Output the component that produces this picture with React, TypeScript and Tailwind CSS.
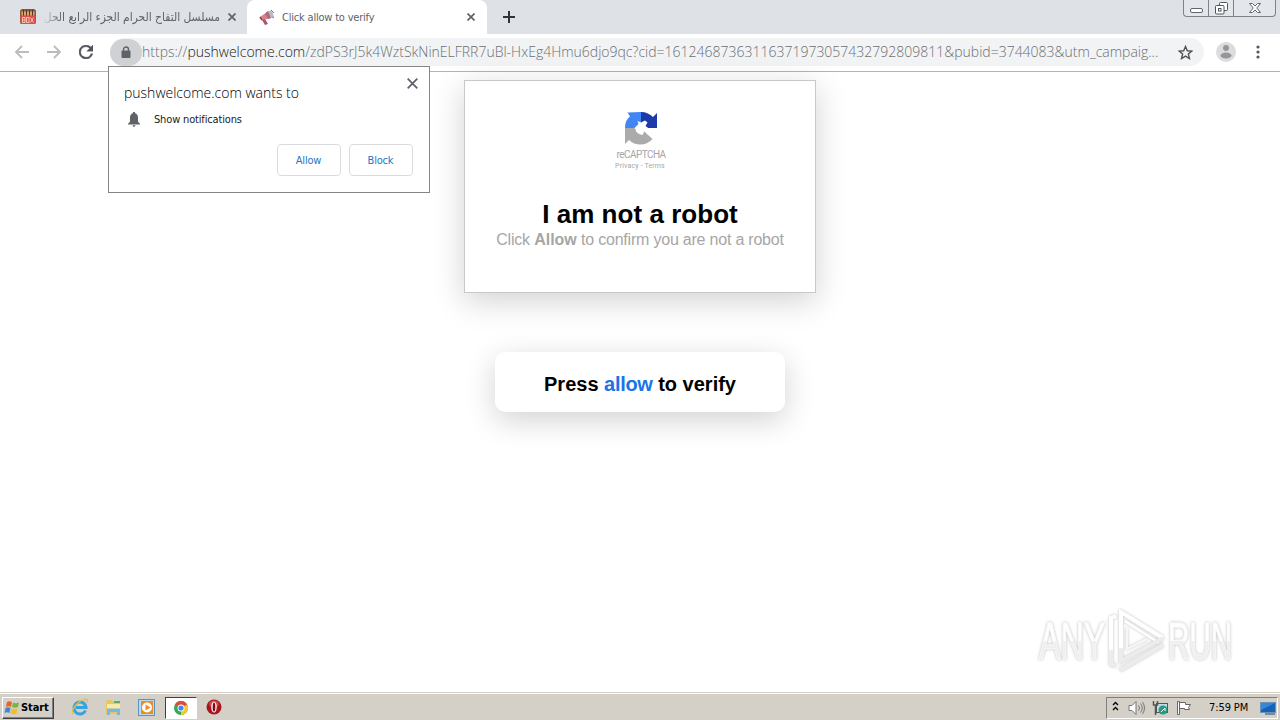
import type { ReactNode } from 'react';

const UI_FONT = "font-['DejaVu_Sans_Condensed','DejaVu_Sans',sans-serif] [font-stretch:condensed]";

function CloseIcon({ size = 8, color = '#5f6368' }: { size?: number; color?: string }) {
  return (
    <svg width={size} height={size} viewBox="0 0 8 8" className="block shrink-0">
      <path d="M.5.5l7 7M7.5.5l-7 7" stroke={color} strokeWidth={size > 8 ? 1.3 : 1.7} />
    </svg>
  );
}

function TabStrip() {
  return (
    <div className="flex h-[34px] bg-[#dee1e6]">
      {/* background tab */}
      <div className="flex h-[34px] w-[247px] items-center pl-[19px] pr-[11px]">
        <svg width="18" height="18" viewBox="0 0 17 18" className="shrink-0">
          <rect x=".5" y="1" width="16" height="15" rx="2.5" fill="#8a5a42" />
          <path d="M2 3.5h13v4H2z" fill="#d9a66b" />
          <path d="M4 1.5v6M7 1.5v6M10 1.5v6M13 1.5v6" stroke="#5a3426" strokeWidth="1" />
          <path d="M1 8h15v8H1z" fill="#d8514a" />
          <path d="M3 9.5h2.5v5H3zM7 9.5h2.5v5H7zM11 9.5l3 5M14 9.5l-3 5M3 12h2.5" fill="none" stroke="#f5c4b0" strokeWidth="1" />
        </svg>
        <div className="ml-[5px] h-5 w-[178px] [mask-image:linear-gradient(to_right,transparent,black_20px)]" dir="rtl">
          <span className={`${UI_FONT} block whitespace-nowrap text-[11.9px] leading-5 text-[#5f6368]`}>
            مسلسل التفاح الحرام الجزء الرابع الحل
          </span>
        </div>
        <div className="ml-auto"><CloseIcon /></div>
      </div>
      {/* active tab */}
      <div className="flex h-[34px] w-[240px] items-center rounded-t-lg bg-white pl-3 pr-3">
        <svg width="16" height="17" viewBox="0 0 16 17" className="shrink-0">
          <path d="M7 3l6-2 2 7-6 2z" fill="#b9bec6" />
          <path d="M1 8l7-5 3 6-8 2.5z" fill="#d9828c" />
          <path d="M6 5l3-3 3 7-3 1z" fill="#b36a78" />
          <path d="M3 11l3-1 3 5-3 1z" fill="#a4596b" />
          <path d="M12 1l3 3M13 8l2 1" stroke="#7e8792" />
          <path d="M1 8l2 3" stroke="#8a4456" strokeWidth="1.5" />
        </svg>
        <span className={`${UI_FONT} ml-[7px] mt-0.5 whitespace-nowrap text-[11px] tracking-[-0.2px] text-[#5f6368]`}>
          Click allow to verify
        </span>
        <div className="ml-auto"><CloseIcon /></div>
      </div>
      <svg width="12" height="12" viewBox="0 0 12 12" className="ml-4 mt-[11px]">
        <path d="M6 0v12M0 6h12" stroke="#303338" strokeWidth="2" />
      </svg>
      {/* window controls */}
      <div className="ml-auto mr-1 flex h-[17px] w-[93px] rounded-b border border-t-0 border-[#7e828b] bg-[#e3e6eb]">
        <div className="flex w-[25px] justify-center border-r border-[#7e828b] pt-2">
          <svg width="13" height="6"><rect x=".5" y=".5" width="12" height="4" rx="1.5" fill="white" stroke="#61656d" /></svg>
        </div>
        <div className="flex w-[25px] justify-center border-r border-[#7e828b] pt-0.5">
          <svg width="13" height="13" fill="white" stroke="#50545c">
            <rect x="4.5" y=".5" width="8" height="8" rx="1" />
            <rect x=".5" y="3.5" width="8.5" height="8.5" rx="1" />
            <rect x="3.5" y="6.5" width="2.5" height="2.5" />
          </svg>
        </div>
        <div className="flex flex-1 justify-center pt-[3px]">
          <svg width="12" height="10" viewBox="0 0 12 10">
            <path d="M.5.5h3L6 3 8.500.5h3L7.8 5l3.7 4.5h-3L6 7 3.500 9.500h-3L4.200 5z" fill="white" stroke="#61656d" />
          </svg>
        </div>
      </div>
    </div>
  );
}

function Toolbar() {
  return (
    <div className="flex h-[38px] items-center border-b border-[#b1b3b5] bg-white pl-[14px]">
      <svg width="16" height="14" viewBox="0 0 16 14" fill="none" stroke="#babcbe" strokeWidth="1.8" className="-mt-0.5">
        <path d="M15 7H2M8 1L2 7l6 6" />
      </svg>
      <svg width="16" height="14" viewBox="0 0 16 14" fill="none" stroke="#babcbe" strokeWidth="1.8" className="-mt-0.5 ml-4">
        <path d="M1 7h13M8 1l6 6-6 6" />
      </svg>
      <svg width="14" height="14" viewBox="4 4 16 16" className="-mt-0.5 ml-[17px]">
        <path fill="#505357" stroke="#505357" strokeWidth=".5" d="M17.65 6.35A7.958 7.958 0 0 0 12 4a8 8 0 1 0 7.73 10h-2.08A6 6 0 1 1 12 6c1.66 0 3.14.69 4.22 1.78L13 11h7V4z" />
      </svg>
      <div className="-mt-px ml-[17px] flex h-7 w-[1094px] items-center rounded-full bg-[#f1f3f4]">
        <div className="flex h-[27px] w-8 shrink-0 items-center justify-center rounded-full bg-[#cfd1d4]">
          <svg width="10" height="13" viewBox="0 0 10 13">
            <path d="M2.5 5V3.500a2.500 2.500 0 0 1 5 0V5" fill="none" stroke="#5f6368" strokeWidth="1.4" />
            <rect x=".5" y="4.5" width="9" height="7.5" rx="1" fill="#5f6368" />
          </svg>
        </div>
        <span className="-mt-0.5 w-[1034px] whitespace-nowrap font-['Open_Sans',sans-serif] text-[14px] font-light text-[#6b6f74]">
          https://<span className="text-[#202124]">pushwelcome.com</span>/zdPS3rJ5k4WztSkNinELFRR7uBl-HxEg4Hmu6djo9qc?cid=16124687363116371973057432792809811&amp;pubid=3744083&amp;utm_campaig...
        </span>
        <svg width="15" height="15" viewBox="0 0 24 24" className="ml-0.5 shrink-0">
          <path d="M12 2.5l2.9 6.7 7.2.6-5.5 4.7 1.7 7.1-6.3-3.800-6.300 3.800 1.700-7.100-5.500-4.700 7.200-.6z" fill="none" stroke="#505357" strokeWidth="2.3" />
        </svg>
      </div>
      <svg width="20" height="20" viewBox="0 0 20 20" className="-mt-0.5 ml-3">
        <circle cx="10" cy="10" r="10" fill="#dcdcdc" />
        <circle cx="10" cy="6" r="3" fill="#949699" />
        <ellipse cx="10" cy="13.5" rx="5.5" ry="3" fill="#949699" />
      </svg>
      <svg width="4" height="14" className="-mt-0.5 ml-5" fill="#55585c">
        <circle cx="2" cy="2" r="1.6" />
        <circle cx="2" cy="7" r="1.6" />
        <circle cx="2" cy="12" r="1.6" />
      </svg>
    </div>
  );
}

function PermissionButton({ children }: { children: ReactNode }) {
  return (
    <button className="h-8 w-16 rounded border border-[#d9dbde] bg-white pr-px pt-0.5 text-[11px] tracking-[-0.2px] text-[#1b77c5]">
      {children}
    </button>
  );
}

function PermissionPopup() {
  return (
    <div className="absolute left-[108px] top-[66px] h-[127px] w-[322px] border border-[#858585] bg-white pl-[15px] pr-4 text-[#202124]">
      <div className="absolute right-[11px] top-[11px]"><CloseIcon size={11} /></div>
      <div className="whitespace-nowrap pt-[15px] font-['Open_Sans',sans-serif] text-[14px] font-light leading-[22px] text-black">
        pushwelcome.com wants to
      </div>
      <div className={UI_FONT}>
        <div className="mt-[5px] flex h-5 items-center">
          <svg width="12" height="15" viewBox="0 0 12 15" className="ml-1" fill="#5f6368">
            <path d="M6 0c.8 0 1.2.5 1.2 1.3C9.300 1.900 10 3.800 10 6v3.700l2 2V12.500H0v-.8l2-2V6c0-2.200.7-4.100 2.800-4.700C4.800.5 5.200 0 6 0zM4.500 13.300h3c0 .9-.6 1.500-1.500 1.500s-1.500-.6-1.500-1.500z" />
          </svg>
          <span className="ml-[14px] mt-0.5 text-[11px] tracking-[-0.16px]">Show notifications</span>
        </div>
        <div className="mt-[15px] flex justify-end gap-2">
          <PermissionButton>Allow</PermissionButton>
          <PermissionButton>Block</PermissionButton>
        </div>
      </div>
    </div>
  );
}

function RecaptchaLogo() {
  return (
    <div className="flex flex-col items-center font-[Roboto,sans-serif] text-[#a6a6a6]">
      <svg width="34" height="33" viewBox="0 0 34 33" className="ml-0.5">
        <path d="M17 0v16H1C1 11 2.500 7 6 4.500L3.500.5z" fill="#4285f4" />
        <path d="M17 0c5 0 9 2 12 5l4-4v15H17z" fill="#1c3aa9" />
        <path d="M1 16v16l4-4c3 3 7 4.500 11.500 4.500 5 0 9-2 12-5.500L23 22l-6-6z" fill="#ababab" />
        <path d="M10.500 16l4-4-1-3 3.500 1.500 4-2 2.500 2-2 3.500 4 3-5 2-2 4-3.500-1-3-2.500-.5-2.500z" fill="white" />
      </svg>
      <div className="ml-0.5 mt-1 text-[10px] leading-3 tracking-[-0.55px]">reCAPTCHA</div>
      <div className="mt-px text-[7px] leading-2 tracking-[0.15px]">Privacy - Terms</div>
    </div>
  );
}

const WATERMARK_TEXT =
  "block origin-left bg-[linear-gradient(to_bottom,white_50%,#efefef_50%)] bg-clip-text font-['Liberation_Sans',sans-serif] text-[52px] leading-[66px] text-transparent [-webkit-text-stroke:1px_#f8f8f8]";

function Watermark() {
  return (
    <div className="absolute left-[1037px] top-[607px] flex h-[68px] w-[200px] items-center [filter:drop-shadow(0_0_1.5px_rgba(0,0,0,0.25))]">
      <div className="w-[70px] shrink-0 pl-0.5">
        <span className={`${WATERMARK_TEXT} w-[110px] scale-x-[0.62]`}>ANY</span>
      </div>
      <svg width="60" height="66" viewBox="0 0 60 66" className="shrink-0" fill="none" stroke="white" strokeWidth="4">
        <path d="M4 51V10l5-2M14 44V4l42 26" />
        <path d="M18 13l34 22" strokeWidth="2.5" />
        <path d="M4 42v14l5 2M14 40v13l42-23M13 62l43-25" stroke="#ececec" />
        <path d="M20 20v21l20-10" strokeWidth="2" stroke="#f7f7f7" />
      </svg>
      <div className="ml-px w-[66px] shrink-0">
        <span className={`${WATERMARK_TEXT} w-[120px] scale-x-[0.57]`}>RUN</span>
      </div>
    </div>
  );
}

function Taskbar() {
  return (
    <div className={`${UI_FONT} flex h-7 items-center border-t border-[#d4d0c8] bg-[#d4d0c8] pl-0.5 pr-0.5 text-black shadow-[inset_0_1px_0_white]`}>
      <div className="mt-0.5 flex h-[22px] w-[52px] items-center border border-b-[#404040] border-l-white border-r-[#404040] border-t-white pl-px shadow-[inset_-1px_-1px_0_#808080]">
        <svg width="16" height="16" viewBox="0 0 16 16" className="shrink-0">
          <path d="M3 2c2-1 3-1 5 0L7 7C5 6 4 6 2 7z" fill="#e7652d" />
          <path d="M9 2.500c2 1 3 1 6 0L14 7c-2 1-4 1-6 0z" fill="#76b83f" />
          <path d="M1.500 8c2-1 3-1 5 0l-1 5c-2-1-3-1-5 0z" fill="#3f87d8" />
          <path d="M7.500 8.500c2 1 4 1 6 0l-1 5c-2 1-4 1-6 0z" fill="#f2bd26" />
        </svg>
        <span className="ml-px mt-px text-[11px] font-bold tracking-[-0.1px]">Start</span>
      </div>
      {/* internet explorer */}
      <svg width="18" height="18" viewBox="0 0 18 18" className="ml-[17px] mt-px" fill="none">
        <path d="M14.500 12.500A6 6 0 1 1 15 9.500H5" stroke="#36a3df" strokeWidth="3" />
        <path d="M2 16C-1 14 5 4 13 1.500c4-1 4 1 3 3" stroke="#e8bd3b" strokeWidth="1.3" />
      </svg>
      {/* explorer */}
      <svg width="17" height="17" viewBox="0 0 17 17" className="ml-4 mt-px">
        <path d="M1 3l1-2h5l1 2h7v12H1z" fill="#e8c65c" />
        <path d="M2 5h13v7H2z" fill="#fae9a3" />
        <path d="M9 2h6v2H9z" fill="#61a86c" />
        <path d="M2 16V9.500h13V16h-3v-3H5v3z" fill="#78b9df" />
      </svg>
      {/* media player */}
      <svg width="17" height="17" viewBox="0 0 17 17" className="ml-4 mt-px">
        <rect x=".5" y=".5" width="16" height="16" fill="#b9daf1" stroke="#5795c4" />
        <rect x="3" y="2" width="12" height="13" fill="#f28b1d" />
        <circle cx="9" cy="8.5" r="5" fill="white" />
        <path d="M7.5 5.5l5 3-5 3z" fill="#f28b1d" />
      </svg>
      {/* chrome, pressed */}
      <div className="ml-[10px] mt-0.5 flex h-[22px] w-8 items-center justify-center border border-b-white border-l-[#404040] border-r-white border-t-[#404040] bg-white">
        <svg width="14" height="14" viewBox="0 0 14 14">
          <circle cx="7" cy="7" r="7" fill="#36a852" />
          <path d="M7 7L.9 3.500a7 7 0 0 1 12.200 0z" fill="#df4a3b" />
          <path d="M7 7l6.100-3.500A7 7 0 0 1 7 14z" fill="#f8c52c" />
          <circle cx="7" cy="7" r="3.5" fill="white" />
          <circle cx="7" cy="7" r="2.6" fill="#4285f4" />
        </svg>
      </div>
      {/* opera */}
      <svg width="16" height="16" viewBox="0 0 16 16" className="ml-[9px] mt-px">
        <circle cx="8" cy="8" r="7.500" fill="#a9151d" />
        <ellipse cx="8" cy="5" rx="5" ry="3.500" fill="#c9474b" />
        <ellipse cx="8" cy="8" rx="2.800" ry="5.500" fill="#f4eded" />
        <ellipse cx="8" cy="8" rx="1.300" ry="4.500" fill="#8c0710" />
      </svg>
      {/* tray */}
      <div className="ml-auto mt-0.5 flex h-[22px] w-[172px] items-center border border-b-white border-l-[#808080] border-r-white border-t-[#808080] pl-[5px]">
        <svg width="7" height="10" fill="none" stroke="black" strokeWidth="1.3" className="-mt-1">
          <path d="M1 4l2.500-2.500L6 4M1 9l2.500-2.500L6 9" />
        </svg>
        <svg width="17" height="16" viewBox="0 0 17 16" className="ml-[9px]" stroke="#777" fill="none">
          <path d="M1 5.500h3l4-4v13l-4-4H1z" fill="white" />
          <path d="M10.500 5.500q2 2.500 0 5M12.500 3.500q3.500 4.500 0 9M14.500 2q4 6 0 12" />
        </svg>
        <svg width="17" height="16" viewBox="0 0 17 16" className="ml-[7px]">
          <rect x="4.500" y="3.500" width="11" height="9" fill="#c4dce8" stroke="#555" />
          <circle cx="11" cy="10" r="4.500" fill="#239c82" />
          <path d="M9 12l4-4v3" stroke="white" fill="none" />
          <path d="M1.500 1v4h4V1M3.500 5v10" stroke="#555" strokeWidth="1.500" fill="none" />
        </svg>
        <svg width="16" height="16" viewBox="0 0 16 16" className="ml-[7px]" fill="white" stroke="#666">
          <path d="M1.500 1.500h2v13h-2zM3.500 2.500h6v2h5l-2 3 1 2h-5v-1h-5z" />
        </svg>
        <span className="ml-[17px] mt-px whitespace-nowrap text-[11px] tracking-[-0.1px]">7:59 PM</span>
        <svg width="16" height="14" viewBox="0 0 16 14" className="ml-auto mr-px">
          <rect x=".5" y="1.500" width="15" height="10" fill="#1762b5" stroke="#6892b9" />
          <path d="M1 2h14L1 9z" fill="#3688d7" />
          <path d="M5 13h10" stroke="#27405f" />
        </svg>
      </div>
    </div>
  );
}

export default function App() {
  return (
    <div className="relative flex h-[720px] w-[1280px] flex-col overflow-hidden bg-white">
      <TabStrip />
      <Toolbar />
      <main className="flex flex-1 flex-col items-center pt-2 font-['Liberation_Sans',Arial,sans-serif]">
        <section className="flex h-[213px] w-[352px] flex-col items-center border border-[#c8c8c8] bg-white pt-[31px] shadow-[0_8px_30px_rgba(0,0,0,0.18)]">
          <RecaptchaLogo />
          <h1 className="mt-[29px] whitespace-nowrap text-[26px] font-bold leading-[30px] tracking-[0.04px] text-black">I am not a robot</h1>
          <p className="mt-px whitespace-nowrap text-[16px] leading-5 tracking-[-0.21px] text-[#a6a6a6]">
            Click <b className="tracking-normal">Allow</b> to confirm you are not a robot
          </p>
        </section>
        <section className="mt-[59px] flex h-[60px] w-[290px] items-center justify-center rounded-[10px] bg-white pt-1 text-[20px] font-bold text-black shadow-[0_8px_30px_rgba(0,0,0,0.18)]">
          <span>Press <span className="tracking-[-0.3px] text-[#1a73e8]">allow</span> to verify</span>
        </section>
      </main>
      <Taskbar />
      <PermissionPopup />
      <Watermark />
    </div>
  );
}
